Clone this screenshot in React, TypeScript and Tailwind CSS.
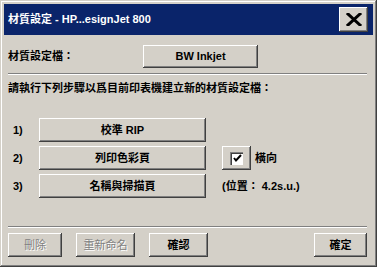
import React from 'react';

const font = { fontFamily: '"Liberation Sans", "Noto Sans CJK TC", sans-serif' };

const bevel =
  'bg-[#d4d0c8] shadow-[inset_-1px_-1px_0_#404040,inset_1px_1px_0_#ffffff,inset_-2px_-2px_0_#808080]';

const Button: React.FC<{ className?: string; disabled?: boolean; children: React.ReactNode }> = ({
  className = '',
  disabled,
  children,
}) => (
  <div
    className={`${bevel} flex items-center justify-center text-[11px] font-bold ${
      disabled ? 'text-[#808080] [text-shadow:1px_1px_0_#ffffff] font-normal' : 'text-black'
    } ${className}`}
  >
    {children}
  </div>
);

const Separator = () => (
  <div className="w-[359px] border-t border-t-[#808080] border-b border-b-white" />
);

export default function App() {
  return (
    <div
      style={font}
      className="w-[377px] h-[267px] bg-[#d4d0c8] p-[4px] flex flex-col shadow-[inset_-1px_-1px_0_#404040,inset_1px_1px_0_#d4d0c8,inset_-2px_-2px_0_#808080,inset_2px_2px_0_#ffffff]"
    >
      {/* Title bar */}
      <div className="h-[31px] bg-[#0a246a] flex items-center justify-between pl-[4px] pr-[5px]">
        <span className="text-white text-[11px] font-bold">材質設定 - HP...esignJet 800</span>
        <div className={`${bevel} w-[29px] h-[25px] flex items-center justify-center`}>
          <svg width="16" height="13" viewBox="0 0 16 13">
            <path d="M2 1 L14 12 M14 1 L2 12" stroke="#000" strokeWidth="3" strokeLinecap="square" />
          </svg>
        </div>
      </div>

      <div className="px-[4px] flex flex-col">
        {/* Profile row */}
        <div className="mt-[10px] flex items-center h-[23px]">
          <span className="w-[135px] text-[11px] font-bold">材質設定檔：</span>
          <Button className="w-[115px] h-[23px]">BW Inkjet</Button>
        </div>

        <div className="mt-[5px]">
          <Separator />
        </div>

        <p className="mt-[6px] text-[11px] leading-[14px] font-bold">
          請執行下列步驟以爲目前印表機建立新的材質設定檔：
        </p>

        {/* Steps */}
        <div className="mt-[23px] flex flex-col gap-[4px]">
          <div className="flex items-center h-[24px]">
            <span className="w-[31px] pl-[5px] text-[11px] font-bold">1)</span>
            <Button className="w-[167px] h-[24px]">校準 RIP</Button>
          </div>
          <div className="flex items-center h-[24px]">
            <span className="w-[31px] pl-[5px] text-[11px] font-bold">2)</span>
            <Button className="w-[167px] h-[24px]">列印色彩頁</Button>
            <div className={`${bevel} ml-[16px] w-[29px] h-[24px] flex items-center justify-center`}>
              <div className="w-[13px] h-[13px] bg-white shadow-[inset_1px_1px_0_#808080,inset_2px_2px_0_#404040] flex items-center justify-center">
                <svg width="9" height="9" viewBox="0 0 9 9" className="ml-[1px] mt-[1px]">
                  <path d="M1 4 L3 6.5 L8 1" stroke="#000" strokeWidth="2" fill="none" />
                </svg>
              </div>
            </div>
            <span className="ml-[4px] text-[11px] font-bold">橫向</span>
          </div>
          <div className="flex items-center h-[24px]">
            <span className="w-[31px] pl-[5px] text-[11px] font-bold">3)</span>
            <Button className="w-[167px] h-[24px]">名稱與掃描頁</Button>
            <span className="ml-[16px] text-[11px] font-bold">(位置： 4.2s.u.)</span>
          </div>
        </div>

        <div className="mt-[28px]">
          <Separator />
        </div>

        {/* Bottom buttons */}
        <div className="mt-[5px] flex items-center">
          <Button disabled className="w-[54px] h-[24px]">刪除</Button>
          <Button disabled className="ml-[14px] w-[59px] h-[24px]">重新命名</Button>
          <Button className="ml-[14px] w-[59px] h-[24px]">確認</Button>
          <Button className="ml-[106px] w-[53px] h-[24px]">確定</Button>
        </div>
      </div>
    </div>
  );
}
